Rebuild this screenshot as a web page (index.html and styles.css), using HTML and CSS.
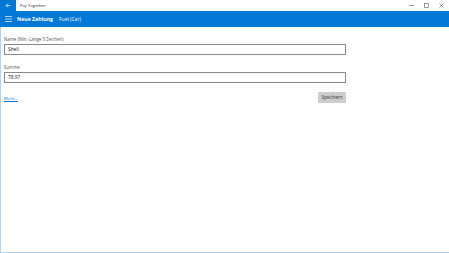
FILE: index.html
```html
<!DOCTYPE html>
<html lang="de">
  <head>
    <meta charset="UTF-8" />
    <title>Pay Together</title>
    <link rel="stylesheet" href="styles.css">
  </head>
  <body>
    <div class="window">
      <div class="titlebar">
        <div class="back">
          <svg width="6" height="5" viewBox="0 0 6 5">
            <path d="M3 0.5 L1 2.5 L3 4.5 M1 2.5 H5.5" stroke="white" stroke-width="0.7" fill="none" />
          </svg>
        </div>
        <span class="apptitle">Pay Together</span>
        <div class="controls">
          <span class="ctl"><svg width="5" height="5"><path d="M0 2.5 H5" stroke="#555" stroke-width="0.6" /></svg></span>
          <span class="ctl"><svg width="5" height="5"><rect x="0.5" y="0.5" width="4" height="4" stroke="#555" stroke-width="0.6" fill="none" /></svg></span>
          <span class="ctl"><svg width="5" height="5"><path d="M0.5 0.5 L4.5 4.5 M4.5 0.5 L0.5 4.5" stroke="#555" stroke-width="0.6" /></svg></span>
        </div>
      </div>
      <div class="appbar">
        <svg class="burger" width="7" height="6" viewBox="0 0 7 6">
          <path d="M0 0.5 H7 M0 3 H7 M0 5.5 H7" stroke="white" stroke-width="0.7" />
        </svg>
        <span class="pagetitle">Neue Zahlung</span>
        <span class="subtitle">Fuel (Car)</span>
      </div>
      <div class="content">
        <div class="field">
          <label class="label">Name (Min.-Länge 3 Zeichen)</label>
          <div class="input">Shell</div>
        </div>
        <div class="field">
          <label class="label">Summe</label>
          <div class="input">78,97</div>
        </div>
        <div class="actions">
          <a class="more" href="#">Mehr...</a>
          <span class="save">Speichern</span>
        </div>
      </div>
    </div>
  </body>
</html>
```

FILE: styles.css
```css
body {
  margin: 0;
  padding: 0;
  background: white;
  font-family: "Segoe UI", "Open Sans", "Noto Sans", sans-serif;
}
.window {
  width: 449px;
  height: 253px;
  display: flex;
  flex-direction: column;
  box-sizing: border-box;
  border-left: 1px solid #aad4f5;
  border-bottom: 1px solid #aad4f5;
}
.titlebar {
  height: 11px;
  display: flex;
  align-items: center;
  background: white;
  margin-left: -1px;
}
.back {
  width: 16px;
  height: 11px;
  background: #0078d7;
  display: flex;
  align-items: center;
  justify-content: center;
}
.apptitle {
  font-size: 4.2px;
  color: #222;
  margin-left: 4px;
}
.controls {
  margin-left: auto;
  display: flex;
}
.ctl {
  width: 15px;
  height: 11px;
  display: flex;
  align-items: center;
  justify-content: center;
}
.appbar {
  height: 16px;
  background: #0078d7;
  display: flex;
  align-items: center;
  color: white;
  margin-left: -1px;
}
.burger {
  margin-left: 5px;
  margin-right: 5px;
}
.pagetitle {
  font-size: 5.2px;
  font-weight: bold;
}
.subtitle {
  font-size: 5px;
  margin-left: 6px;
}
.content {
  padding: 9px 0 0 3px;
  width: 342px;
}
.field {
  display: flex;
  flex-direction: column;
  margin-bottom: 9px;
}
.label {
  font-size: 4.4px;
  color: #555;
  margin-bottom: 2px;
}
.input {
  height: 11px;
  border: 1px solid #888;
  box-sizing: border-box;
  font-size: 4.8px;
  padding-left: 3px;
  line-height: 9px;
  color: #111;
}
.actions {
  display: flex;
  justify-content: space-between;
  align-items: center;
}
.more {
  font-size: 4.3px;
  color: #0078d7;
  margin-top: 1px;
}
.save {
  background: #ccc;
  font-size: 4.5px;
  color: #333;
  width: 28px;
  height: 11px;
  line-height: 11px;
  text-align: center;
}
```
